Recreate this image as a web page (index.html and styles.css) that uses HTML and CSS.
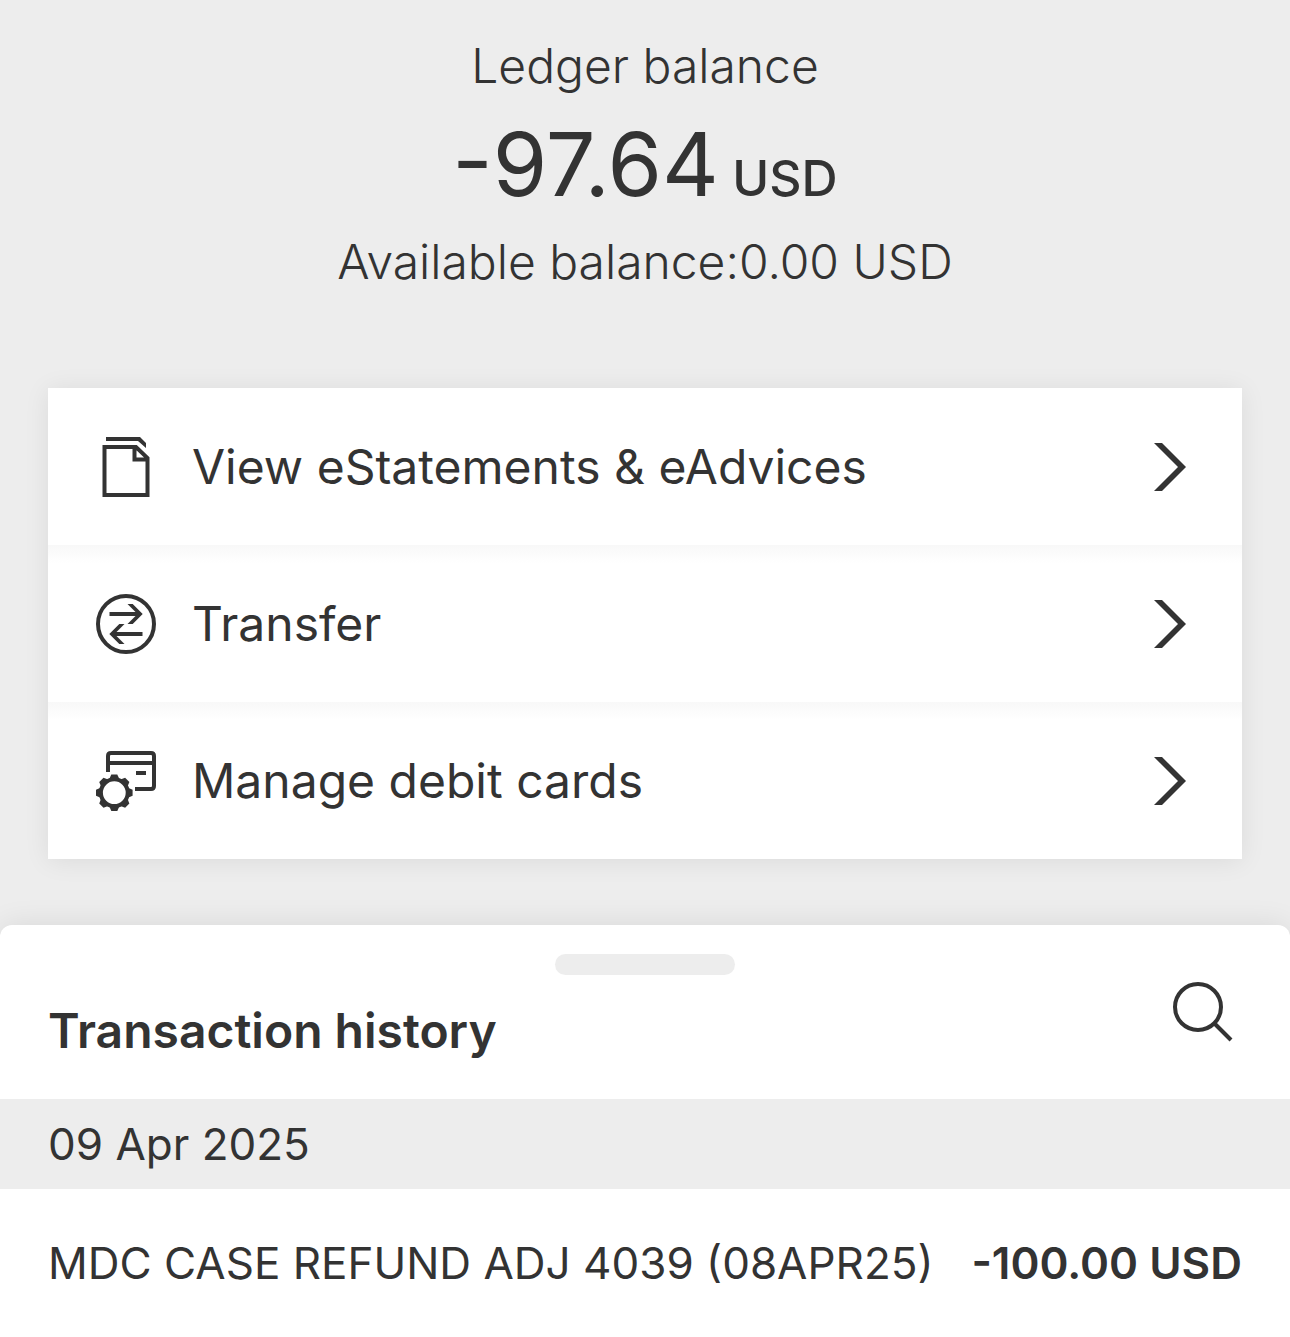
FILE: index.html
```html
<!DOCTYPE html>
<html lang="en">
<head>
  <meta charset="UTF-8">
  <meta name="viewport" content="width=device-width, initial-scale=1.0">
  <title>Account details</title>
  <link rel="stylesheet" href="styles.css">
</head>
<body>
  <header class="balance">
    <p class="balance-label">Ledger balance</p>
    <p class="balance-amount">-97.64<span class="currency"> USD</span></p>
    <p class="balance-label">Available balance:0.00 USD</p>
  </header>

  <nav class="actions">
    <a class="action" href="#statements">
      <svg class="action-icon" viewBox="0 0 60 60" aria-hidden="true">
        <path d="M10 0H44L50 6V11L42 4H10Z" fill="currentColor"/>
        <path d="M8.5 10H40L51.5 21V58H8.5Z M38.5 10V22.5H51.5" fill="none" stroke="currentColor" stroke-width="4"/>
      </svg>
      <span class="action-text">View eStatements &amp; eAdvices</span>
      <svg class="chevron" viewBox="0 0 48 48" aria-hidden="true">
        <path d="M8 0H16L40 24L16 48H8L32 24Z" fill="currentColor"/>
      </svg>
    </a>
    <a class="action" href="#transfer">
      <svg class="action-icon" viewBox="0 0 60 60" aria-hidden="true">
        <circle cx="30" cy="30" r="28" fill="none" stroke="currentColor" stroke-width="4"/>
        <path d="M13.5 18H39.5L31.5 10H36.7L46.7 20L36.7 30H31.5L39.5 22H13.5Z" fill="currentColor"/>
        <path d="M46.5 42H20.5L28.5 50H23.3L13.3 40L23.3 30H28.5L20.5 38H46.5Z" fill="currentColor"/>
      </svg>
      <span class="action-text">Transfer</span>
      <svg class="chevron" viewBox="0 0 48 48" aria-hidden="true">
        <path d="M8 0H16L40 24L16 48H8L32 24Z" fill="currentColor"/>
      </svg>
    </a>
    <a class="action" href="#cards">
      <svg class="action-icon" viewBox="0 0 60 60" aria-hidden="true">
        <path d="M12 21V5Q12 2 15 2H55Q58 2 58 5V35Q58 38 55 38H39 M12 12H58 M40 22H50" fill="none" stroke="currentColor" stroke-width="4"/>
        <circle cx="18.3" cy="41.7" r="13.4" fill="none" stroke="currentColor" stroke-width="4"/>
        <g fill="currentColor">
          <path id="tooth" d="M13.3 28L15.3 23.4H21.3L23.3 28Z"/>
          <use href="#tooth" transform="rotate(45 18.3 41.7)"/>
          <use href="#tooth" transform="rotate(90 18.3 41.7)"/>
          <use href="#tooth" transform="rotate(135 18.3 41.7)"/>
          <use href="#tooth" transform="rotate(180 18.3 41.7)"/>
          <use href="#tooth" transform="rotate(225 18.3 41.7)"/>
          <use href="#tooth" transform="rotate(270 18.3 41.7)"/>
          <use href="#tooth" transform="rotate(315 18.3 41.7)"/>
        </g>
      </svg>
      <span class="action-text">Manage debit cards</span>
      <svg class="chevron" viewBox="0 0 48 48" aria-hidden="true">
        <path d="M8 0H16L40 24L16 48H8L32 24Z" fill="currentColor"/>
      </svg>
    </a>
  </nav>

  <main class="sheet">
    <div class="handle"></div>
    <div class="sheet-header">
      <h1 class="sheet-title">Transaction history</h1>
      <button class="search-button" type="button" aria-label="Search transactions">
        <svg class="search-icon" viewBox="0 0 72 72" aria-hidden="true">
          <circle cx="28" cy="32" r="23" fill="none" stroke="currentColor" stroke-width="4"/>
          <path d="M44 48L61 65" stroke="currentColor" stroke-width="4"/>
        </svg>
      </button>
    </div>
    <h2 class="date">09 Apr 2025</h2>
    <div class="transaction">
      <span>MDC CASE REFUND ADJ 4039 (08APR25)</span>
      <span class="amount">-100.00 USD</span>
    </div>
  </main>
</body>
</html>
```
FILE: styles.css
```css
* {
  box-sizing: border-box;
}

body {
  margin: 0;
  min-height: 100vh;
  display: flex;
  flex-direction: column;
  background-color: #ededed;
  color: #333;
  font-family: Inter, "Liberation Sans", sans-serif;
}

p,
h1,
h2 {
  margin: 0;
}

.balance {
  padding-top: 36px;
  text-align: center;
}

.balance-label {
  font-size: 48px;
  font-weight: 300;
  line-height: 60px;
}

.balance-amount {
  font-size: 88px;
  line-height: 136px;
}

.currency {
  font-size: 50px;
  font-weight: 500;
  line-height: 48px;
}

.actions {
  margin: 96px 48px 66px;
  box-shadow: 0 2px 24px rgba(0, 0, 0, 0.08);
}

.action {
  display: flex;
  align-items: center;
  height: 157px;
  padding: 0 48px;
  background-color: #fff;
  color: #333;
  text-decoration: none;
}

.action + .action {
  background-image: linear-gradient(#f8f8f8, #fff 18px);
}

.action-icon {
  width: 60px;
  height: 60px;
  margin-right: 36px;
}

.action-text {
  flex: 1;
  font-size: 48px;
}

.chevron {
  width: 48px;
  height: 48px;
}

.sheet {
  flex: 1;
  padding-top: 29px;
  background-color: #fff;
  border-radius: 12px 12px 0 0;
  box-shadow: 0 0 30px rgba(0, 0, 0, 0.09);
}

.handle {
  width: 180px;
  height: 21px;
  margin: 0 auto;
  border-radius: 11px;
  background-color: #ededed;
}

.sheet-header {
  display: flex;
  justify-content: space-between;
  align-items: flex-start;
  padding: 0 48px 12px;
}

.sheet-title {
  font-size: 48px;
  font-weight: 600;
  line-height: 112px;
}

.search-button {
  padding: 0;
  border: none;
  background: none;
  color: #333;
  cursor: pointer;
}

.search-icon {
  display: block;
  width: 72px;
  height: 72px;
}

.date {
  padding: 0 48px;
  background-color: #ededed;
  font-size: 44px;
  font-weight: 400;
  line-height: 90px;
}

.transaction {
  display: flex;
  justify-content: space-between;
  padding: 0 48px;
  font-size: 44px;
  line-height: 148px;
}

.amount {
  font-weight: 600;
}
```
